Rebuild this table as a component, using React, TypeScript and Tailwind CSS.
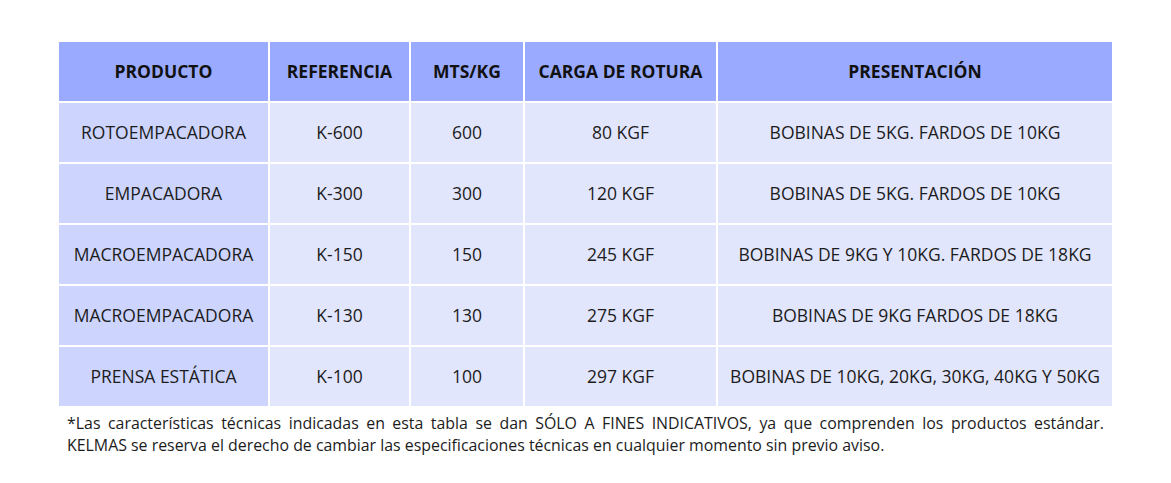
const headers = ["PRODUCTO", "REFERENCIA", "MTS/KG", "CARGA DE ROTURA", "PRESENTACIÓN"];

const rows = [
  ["ROTOEMPACADORA", "K-600", "600", "80 KGF", "BOBINAS DE 5KG. FARDOS DE 10KG"],
  ["EMPACADORA", "K-300", "300", "120 KGF", "BOBINAS DE 5KG. FARDOS DE 10KG"],
  ["MACROEMPACADORA", "K-150", "150", "245 KGF", "BOBINAS DE 9KG Y 10KG. FARDOS DE 18KG"],
  ["MACROEMPACADORA", "K-130", "130", "275 KGF", "BOBINAS DE 9KG FARDOS DE 18KG"],
  ["PRENSA ESTÁTICA", "K-100", "100", "297 KGF", "BOBINAS DE 10KG, 20KG, 30KG, 40KG Y 50KG"],
];

export default function App() {
  return (
    <div
      className="min-h-screen bg-white pl-[59px] pt-[42px]"
      style={{ fontFamily: '"Open Sans", "Noto Sans", sans-serif' }}
    >
      <div className="w-[1053px]">
        <div className="grid grid-cols-[209px_139px_112px_191px_394px] gap-[2px] bg-white">
          {headers.map((h) => (
            <div
              key={h}
              className="flex h-[59px] items-center justify-center bg-[#9aabff] text-[17.5px] font-bold text-[#111]"
            >
              {h}
            </div>
          ))}
          {rows.map((row, i) =>
            row.map((cell, j) => (
              <div
                key={`${i}-${j}`}
                className={`flex h-[59px] items-center justify-center text-[17.5px] text-[#1c1c1c] ${
                  j === 0 ? "bg-[#cdd5fe]" : "bg-[#e2e6fd]"
                }`}
              >
                {cell}
              </div>
            ))
          )}
        </div>
        <p className="mt-[6px] px-2 text-justify text-[15.9px] leading-[22px] text-[#1c1c1c]">
          *Las características técnicas indicadas en esta tabla se dan SÓLO A FINES INDICATIVOS, ya que
          comprenden los productos estándar. KELMAS se reserva el derecho de cambiar las especificaciones
          técnicas en cualquier momento sin previo aviso.
        </p>
      </div>
    </div>
  );
}
